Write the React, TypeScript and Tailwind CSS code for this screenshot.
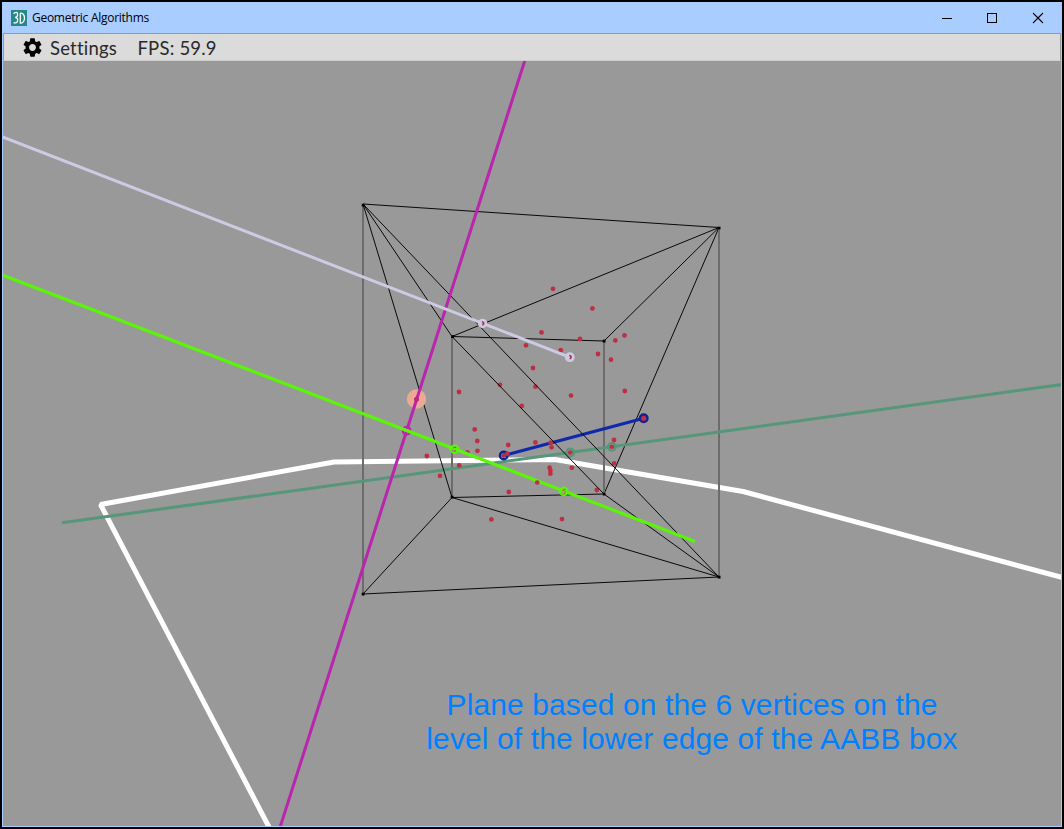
import React from "react";
import { MdSettings } from "react-icons/md";

type Segment = [number, number, number, number];
type Point = [number, number];

const boxEdges: Segment[] = [
  [363, 204, 719, 227.5],
  [719, 577, 363, 594],
  [452, 336.5, 604, 341],
  [604, 494, 452, 497.5],
  [363, 204, 452, 336.5],
  [719, 227.5, 604, 341],
  [363, 594, 452, 497.5],
  [719, 227.5, 604, 494],
  [452, 497.5, 719, 577],
];

const frontEdges: Segment[] = [
  [363, 204, 719, 577],
  [604, 494, 719, 577],
  [363, 204, 452, 497.5],
  [452, 336.5, 604, 494],
  [452, 336.5, 719, 227.5],
];

const uprights: Segment[] = [
  [363, 204, 363, 594],
  [719, 228, 719, 577],
  [452, 337, 452, 497],
  [604, 341, 604, 494],
];

const corners: Point[] = [
  [363, 205], [719, 228], [719, 577], [363, 594],
  [452.5, 336.5], [604, 341], [604, 494], [452, 497],
];

const cloud: Point[] = [
  [553, 288.8], [592.4, 308.4], [624.5, 335.4], [615.3, 340.4], [580, 339],
  [541.5, 332.4], [526, 345.3], [560.8, 350.2], [598, 354], [611, 359.7],
  [533, 368], [500, 384.8], [535.4, 386.7], [459, 392], [571, 395.6],
  [624.8, 391], [521.8, 406], [474.7, 429.4], [477.3, 441], [477.4, 450.8],
  [467.4, 452.3], [426.8, 456], [459.2, 465.4], [440, 475.8], [508.2, 445],
  [507.4, 453.8], [535.4, 442.4], [551.6, 447.3], [614, 440],
  [614.2, 463.4], [571.8, 467.8], [549.6, 467.7], [550.4, 470.6],
  [550.4, 473.7], [596.8, 490], [508.8, 492], [491.4, 519.4],
  [562, 519.1],
];

function Segments({ items }: { items: Segment[] }) {
  return (
    <>
      {items.map(([x1, y1, x2, y2], i) => (
        <line key={i} x1={x1} y1={y1} x2={x2} y2={y2} />
      ))}
    </>
  );
}

function Scene() {
  return (
    <svg
      className="block h-[765px] w-[1058px]"
      viewBox="3 61 1058 765"
      fill="none"
    >
      <polyline
        points="270,829 100.5,504.5 334,462 555,459.5 743,491.5 1064,578"
        stroke="#fff"
        strokeWidth="5"
        strokeLinejoin="bevel"
      />
      <g stroke="#000" strokeWidth="0.95">
        <Segments items={boxEdges} />
      </g>
      <g stroke="#6c6c6c" strokeWidth="2">
        <Segments items={uprights} />
      </g>
      <g fill="#000">
        {corners.map(([x, y], i) => (
          <rect key={i} x={x - 1.3} y={y - 1.3} width="2.8" height="2.8" />
        ))}
      </g>
      <line x1="62" y1="522.7" x2="1062" y2="384.5" stroke="#56967a" strokeWidth="3" />
      <circle cx="570.2" cy="452.5" r="3.8" stroke="#56967a" strokeWidth="2.2" />
      <circle cx="611.8" cy="446.8" r="3.8" stroke="#56967a" strokeWidth="2.2" />
      <g fill="#bd3044">
        {cloud.map(([x, y], i) => (
          <circle key={i} cx={x} cy={y} r="2.4" />
        ))}
        <circle cx="570.2" cy="452.5" r="2.3" />
        <circle cx="611.8" cy="446.8" r="2.3" />
      </g>
      <line x1="503.7" y1="455.5" x2="643.7" y2="418.3" stroke="#1029aa" strokeWidth="3" />
      <circle cx="503.7" cy="455.5" r="3.8" stroke="#0d2391" strokeWidth="2.4" />
      <circle cx="503.7" cy="455.5" r="2.4" fill="#a52f55" />
      <circle cx="507.4" cy="453.8" r="2.3" fill="#bd3044" />
      <circle cx="550.7" cy="442.7" r="2.4" fill="#bd3044" />
      <circle cx="643.7" cy="418.3" r="3.8" fill="#bd3044" stroke="#0d2391" strokeWidth="2.4" />
      <g stroke="#000" strokeWidth="0.95">
        <Segments items={frontEdges} />
      </g>
      <circle cx="416.5" cy="399" r="9.7" fill="#eca994" />
      <line x1="525" y1="60" x2="279.5" y2="829" stroke="#b925ac" strokeWidth="3" />
      <circle cx="416.5" cy="399.2" r="2.5" fill="#bd2b68" />
      <circle cx="406.6" cy="430.7" r="3.8" stroke="#b925ac" strokeWidth="2.2" />
      <path d="M2 136.8L570 357.3" stroke="#cfcae3" strokeWidth="3" />
      <circle cx="482.5" cy="323.4" r="3.7" fill="#cfcae3" stroke="#cfcae3" strokeWidth="2" />
      <path d="M481.5 321.3a2.2 2.2 0 1 1 .4 4.2l.8-2z" fill="#ad3044" />
      <circle cx="569.8" cy="357.2" r="3.8" fill="#cfcae3" stroke="#cfcae3" strokeWidth="2.2" />
      <path d="M568.9 355a2.2 2.2 0 1 1 .4 4.2l.8-2z" fill="#ad3044" />
      <path d="M2 274.8L695 541.5" stroke="#5af509" strokeWidth="3.2" />
      <circle cx="537.2" cy="482.5" r="2.3" fill="#bd3044" />
      <circle cx="454.6" cy="449.2" r="3.8" stroke="#5af509" strokeWidth="2" />
      <circle cx="563.8" cy="491.4" r="3.8" stroke="#5af509" strokeWidth="2" />
      <path d="M453 448l3-.8m-2 3.6l2 .2M562.3 490.5l3-1m-1 3.8l1.2-2" stroke="#a75532" strokeWidth="1" />
    </svg>
  );
}

export default function App() {
  return (
    <div className="relative flex h-[829px] w-[1064px] flex-col overflow-hidden border-2 border-black bg-[#a9cdff]">
      <header className="flex h-[31px] shrink-0 items-center pl-[9px]">
        <svg className="h-4 w-4" viewBox="0 0 16 16" fill="none">
          <rect width="16" height="16" fill="#268987" />
          <path
            d="M2.5 3.6Q6.6 1 6.6 4.4Q6.5 7 4.2 7.4Q7 7.8 6.7 10.4Q6.2 13.8 2.5 12.7M9.3 2.9v10.2c5.6 0 5.6-10.2 0-10.2"
            stroke="#fff"
            strokeWidth="1.3"
          />
        </svg>
        <h1 className="ml-[5px] pt-px font-['Open_Sans',sans-serif] text-[12px] leading-4 tracking-[-0.27px] whitespace-nowrap text-black">
          Geometric Algorithms
        </h1>
        <svg className="mr-[2px] ml-auto h-[30px] w-[118px]" viewBox="942 2 118 30" fill="none" stroke="#000">
          <path d="M942 17.5h10" />
          <rect x="987.5" y="12.5" width="9" height="9" />
          <path d="M1033 12l10 10m0-10l-10 10" strokeWidth="1.1" />
        </svg>
      </header>
      <main className="flex flex-1 flex-col border-x border-b border-[#a9cdff] bg-[#999]">
        <nav className="flex h-7 shrink-0 items-center border border-[#999] border-b-[#cdcdcd] bg-[#dbdbdb] pt-[2px] pl-[17px] font-['Lato',sans-serif] text-[18.5px] leading-none tracking-[0.2px] text-[#292929]">
          <MdSettings className="mb-[2px] h-[23px] w-[23px] text-black" />
          <span className="ml-[6px] whitespace-nowrap">Settings</span>
          <span className="ml-[20.5px] whitespace-nowrap">FPS: 59.9</span>
        </nav>
        <div className="relative h-[765px]">
          <Scene />
          <p className="absolute top-[627px] left-[389px] w-[600px] text-center font-['Liberation_Sans',sans-serif] text-[30px] leading-[34px] tracking-[0.11px] text-[#0080ff]">
            Plane based on the 6 vertices on the
            <br />
            level of the lower edge of the AABB box
          </p>
        </div>
      </main>
    </div>
  );
}
